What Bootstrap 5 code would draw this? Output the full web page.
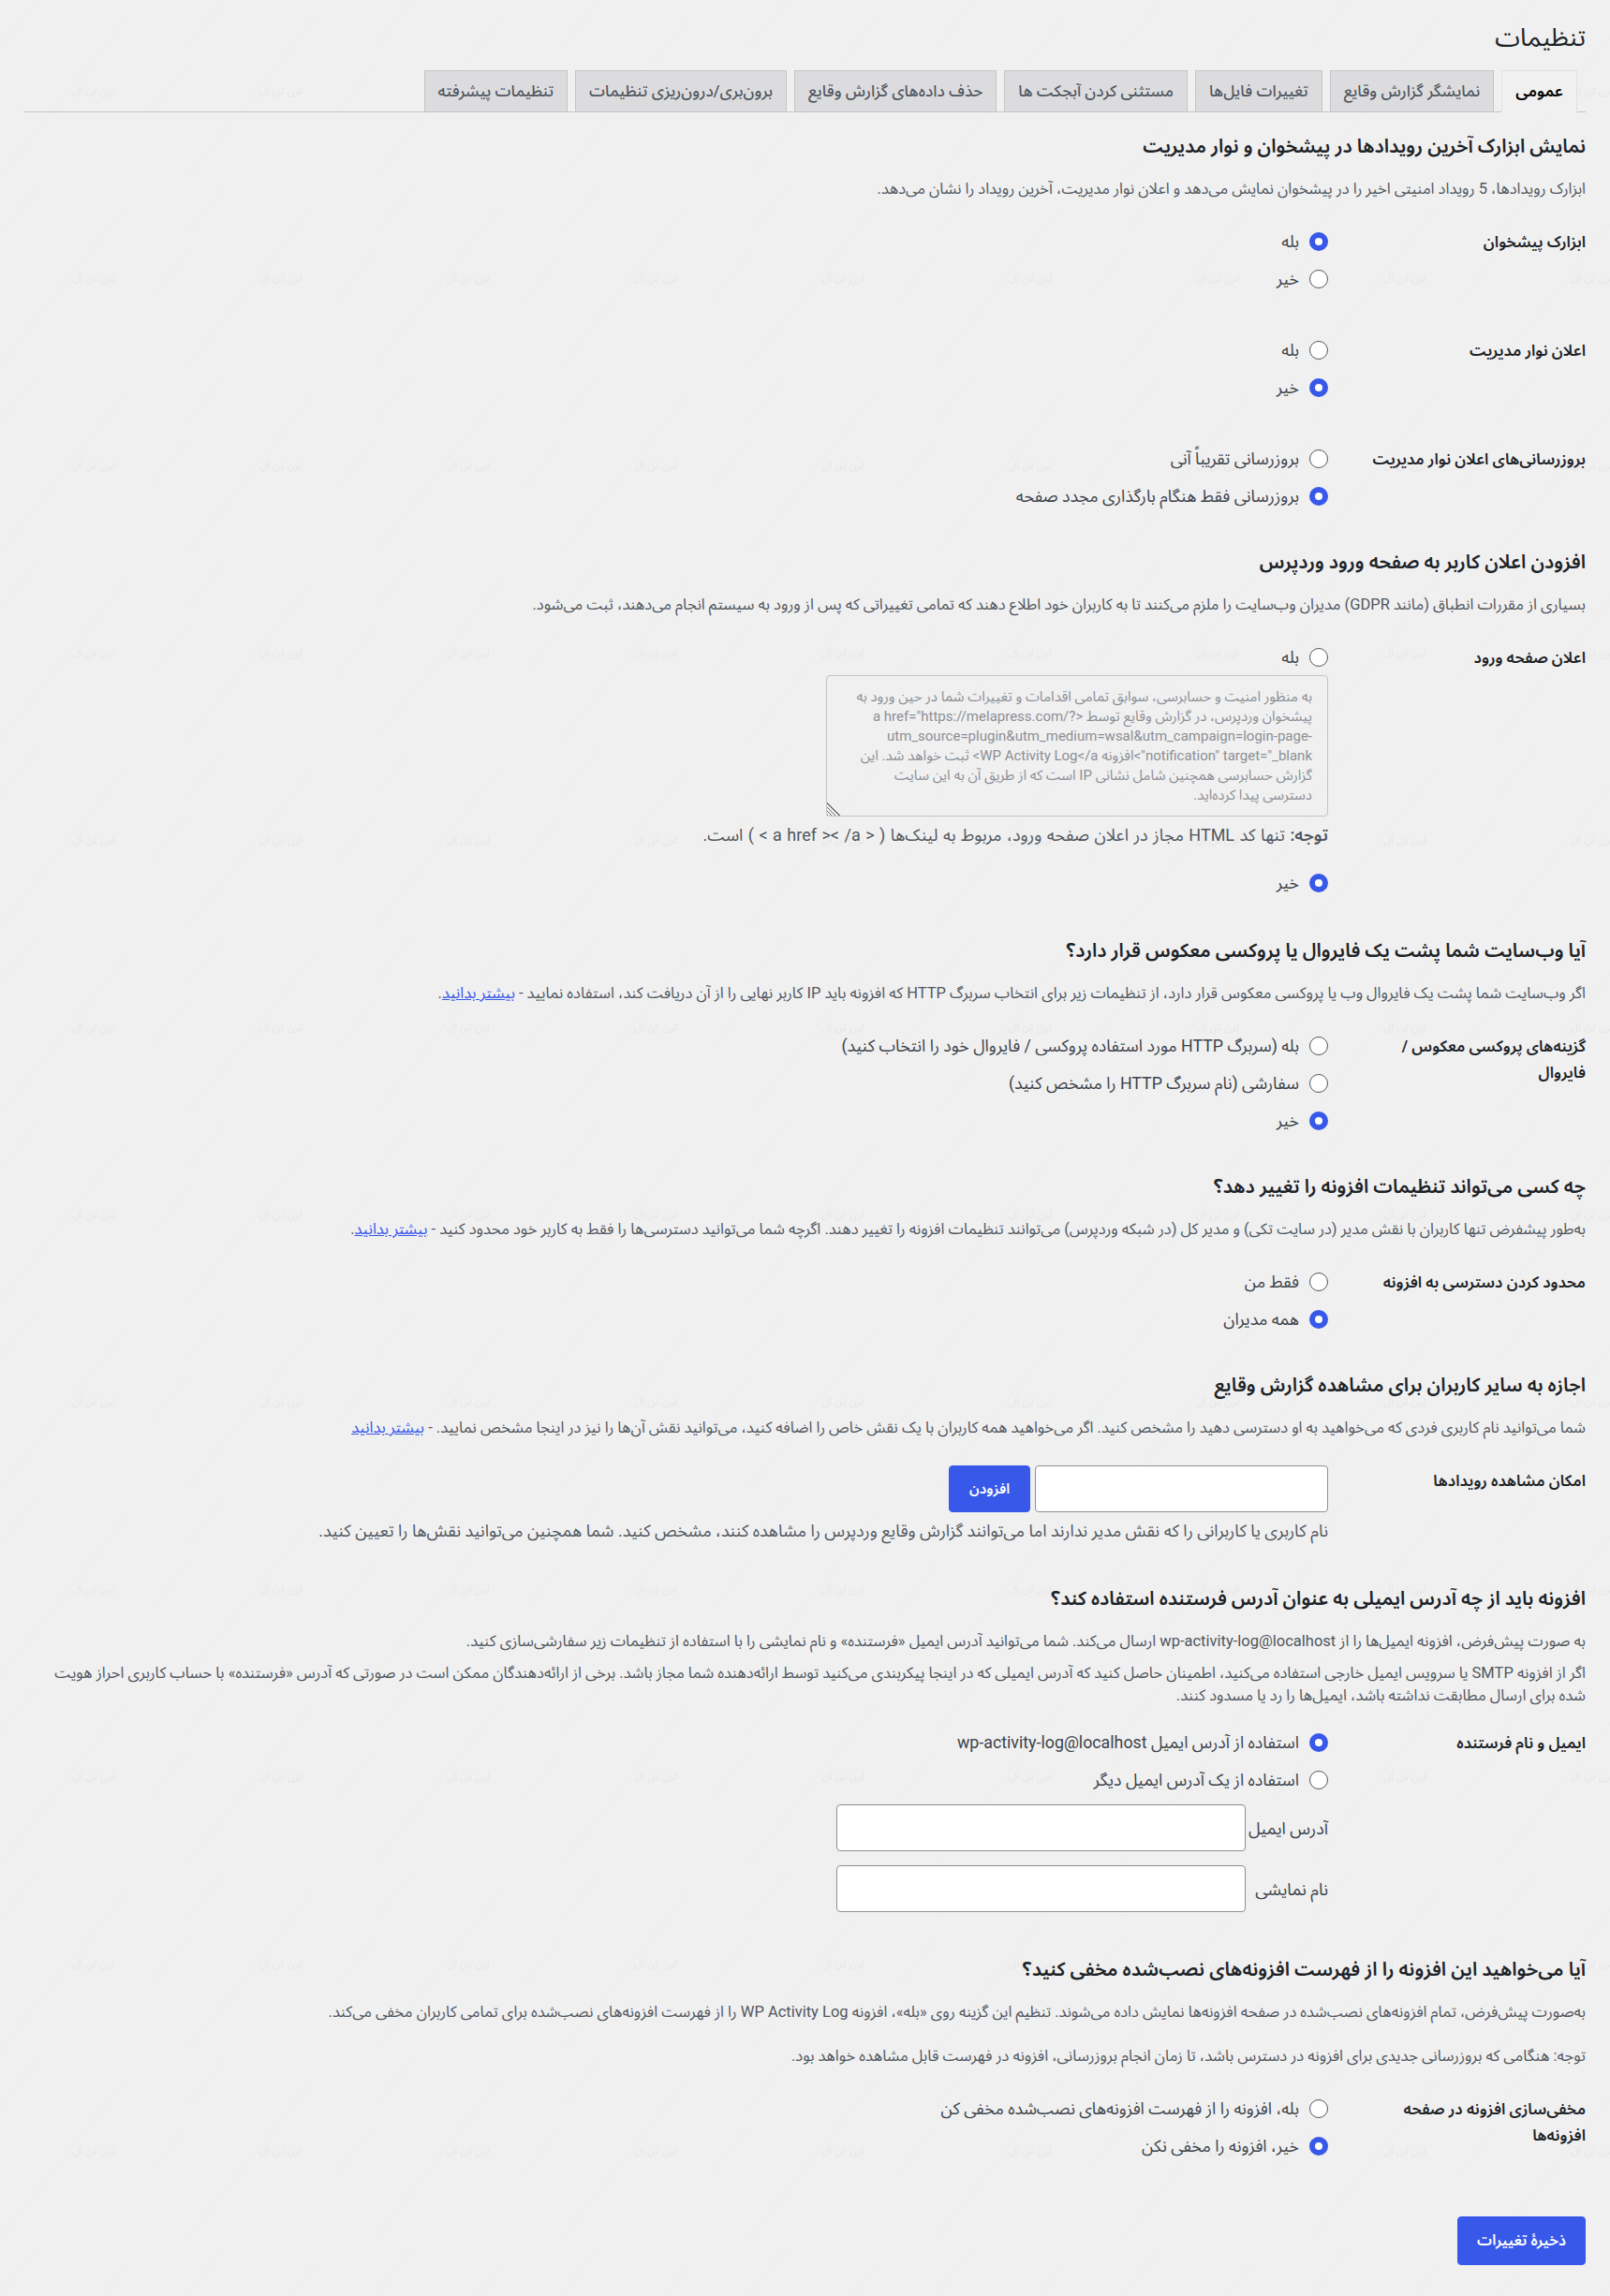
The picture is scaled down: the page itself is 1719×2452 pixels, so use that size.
<!DOCTYPE html>
<html dir="rtl" lang="fa">
<head>
<meta charset="utf-8">
<title>تنظیمات</title>
<link href="https://cdn.jsdelivr.net/npm/bootstrap@5.3.0/dist/css/bootstrap.min.css" rel="stylesheet">
<style>
html,body{min-height:2452px}
body{background-color:#f0f0f1;background-image:url("data:image/svg+xml;utf8,<svg xmlns='http://www.w3.org/2000/svg' width='200' height='200'><path d='M0 190L135 20M200 70L160 120M40 0L0 50' stroke='%23000' stroke-opacity='.012' fill='none'/><text x='100' y='101' text-anchor='middle' direction='rtl' font-size='11' font-weight='700' fill='%23e9e9ea' font-family='Noto Sans Arabic,sans-serif'>لرن تن آل</text></svg>");font-family:Roboto,"Noto Sans Arabic","Liberation Sans",sans-serif;color:#50575e;font-size:16.5px}
.setwrap{padding:0 26px 0 25px}
.pagettl{font-size:27px;font-weight:400;line-height:36px;margin:0;padding-top:22px;color:#1d2327}
.tabsbar{margin-top:17px;border-bottom:1px solid #c3c4c7;padding:0 9px 0 0;gap:8px;flex-wrap:nowrap}
.tabsbar .nav-link{height:45px;margin-bottom:-1px;padding:0 14px;line-height:43px;font-size:17px;font-weight:500;color:#50575e;background:#dcdcde;border:1px solid #c3c4c7;border-radius:0;white-space:nowrap}
.tabsbar .nav-link.active{background:#f0f0f1;color:#000;font-weight:600;border-bottom-color:#f0f0f1}
.secttl{font-size:20.4px;font-weight:600;line-height:28px;color:#1d2327;margin:36px 0 0}
.secttl.first{margin-top:22px}
.secttl.s3{margin-top:38px}
.secttl.s6{margin-top:46px}
.secttl.s7{margin-top:47px}
.secinfo{font-size:16.5px;line-height:24px;margin:20px 0 0;color:#50575e}
.secinfo.tight{margin-top:10px;padding-left:20px}
.secinfo.apart{margin-top:23px}
.secinfo a,.notetxt a{color:#3858e9}
.setrow{margin-top:24px}
.setrow.next{margin-top:36px}
.setrow.boxrow{margin-top:28px}
.setrow.mailrow{margin-top:18px}
.setrow.hiderow{margin-top:24px}
.setlbl{width:275px;flex:0 0 275px;padding-top:7px;padding-left:40px;font-size:16.7px;font-weight:600;line-height:28px;color:#1d2327}
.boxrow .setlbl{padding-top:3px}
.optline{height:40px;font-size:17.8px;color:#3c434a;gap:11px;margin:0}
.form-check-input.wradio{width:20px;height:20px;margin:0;flex:none;background-color:#fff;border:1px solid #50575e;box-shadow:none}
.form-check-input.wradio:checked{background-image:none;background-color:#fff;border:6px solid #3858e9}
.form-control.loginmsg{width:536px;height:151px;display:block;margin-top:-1px;padding:12px 16px;font-size:15px;line-height:21px;color:#8c8f94;background:transparent;border:1px solid #c3c4c7;border-radius:4px;opacity:1}
.loginmsg::-webkit-resizer{background:linear-gradient(to top right,transparent 50%,#f0f0f1 50%),repeating-linear-gradient(45deg,#6f7377 0 1px,transparent 1px 3px)}
.notetxt{font-size:18px;line-height:24px;margin:8px 0 0;color:#50575e}
.notetxt.htmlnote{word-spacing:1px}
.notetxt.addnote{margin-top:8px}
.wide-gap{margin-top:19px}
.txtbox{border:1px solid #8c8f94;border-radius:4px;height:50px;background:#fff;box-shadow:none}
.userbox{width:313px;flex:none}
.addbtn{width:87px;height:50px;margin-right:5px;padding:0;font-size:15px;font-weight:600}
.addbtn,.savebtn{background:#3858e9;border:1px solid #3858e9;border-radius:4px;color:#fff}
.emailline{margin-top:6px}
.emailline+.emailline{margin-top:15px}
.emailline label{width:88px;flex:none;font-size:18px;margin:0;color:#3c434a}
.emailbox{width:437px;flex:none}
.savebtn{width:137px;height:52px;padding:0;font-size:16px;font-weight:600}
.savebar{margin-top:55px}
</style>
</head>
<body>
<div class="setwrap">
  <h1 class="pagettl">تنظیمات</h1>
  <ul class="nav nav-tabs tabsbar">
    <li class="nav-item"><a class="nav-link active" href="#">عمومی</a></li>
    <li class="nav-item"><a class="nav-link" href="#">نمایشگر گزارش وقایع</a></li>
    <li class="nav-item"><a class="nav-link" href="#">تغییرات فایل‌ها</a></li>
    <li class="nav-item"><a class="nav-link" href="#">مستثنی کردن آبجکت ها</a></li>
    <li class="nav-item"><a class="nav-link" href="#">حذف داده‌های گزارش وقایع</a></li>
    <li class="nav-item"><a class="nav-link" href="#">برون‌بری/درون‌ریزی تنظیمات</a></li>
    <li class="nav-item"><a class="nav-link" href="#">تنظیمات پیشرفته</a></li>
  </ul>

  <h3 class="secttl first">نمایش ابزارک آخرین رویدادها در پیشخوان و نوار مدیریت</h3>
  <p class="secinfo">ابزارک رویدادها، 5 رویداد امنیتی اخیر را در پیشخوان نمایش می‌دهد و اعلان نوار مدیریت، آخرین رویداد را نشان می‌دهد.</p>
  <div class="d-flex setrow">
    <div class="setlbl">ابزارک پیشخوان</div>
    <div class="flex-grow-1">
      <label class="d-flex align-items-center optline"><input class="form-check-input wradio" type="radio" name="r1" checked><span>بله</span></label>
      <label class="d-flex align-items-center optline"><input class="form-check-input wradio" type="radio" name="r1"><span>خیر</span></label>
    </div>
  </div>
  <div class="d-flex setrow next">
    <div class="setlbl">اعلان نوار مدیریت</div>
    <div class="flex-grow-1">
      <label class="d-flex align-items-center optline"><input class="form-check-input wradio" type="radio" name="r2"><span>بله</span></label>
      <label class="d-flex align-items-center optline"><input class="form-check-input wradio" type="radio" name="r2" checked><span>خیر</span></label>
    </div>
  </div>
  <div class="d-flex setrow next">
    <div class="setlbl">بروزرسانی‌های اعلان نوار مدیریت</div>
    <div class="flex-grow-1">
      <label class="d-flex align-items-center optline"><input class="form-check-input wradio" type="radio" name="r3"><span>بروزرسانی تقریباً آنی</span></label>
      <label class="d-flex align-items-center optline"><input class="form-check-input wradio" type="radio" name="r3" checked><span>بروزرسانی فقط هنگام بارگذاری مجدد صفحه</span></label>
    </div>
  </div>

  <h3 class="secttl">افزودن اعلان کاربر به صفحه ورود وردپرس</h3>
  <p class="secinfo">بسیاری از مقررات انطباق (مانند GDPR) مدیران وب‌سایت را ملزم می‌کنند تا به کاربران خود اطلاع دهند که تمامی تغییراتی که پس از ورود به سیستم انجام می‌دهند، ثبت می‌شود.</p>
  <div class="d-flex setrow">
    <div class="setlbl">اعلان صفحه ورود</div>
    <div class="flex-grow-1">
      <label class="d-flex align-items-center optline"><input class="form-check-input wradio" type="radio" name="r4"><span>بله</span></label>
      <textarea class="form-control loginmsg" disabled>به منظور امنیت و حسابرسی، سوابق تمامی اقدامات و تغییرات شما در حین ورود به پیشخوان وردپرس، در گزارش وقایع توسط <a href="https://melapress.com/?utm_source=plugin&utm_medium=wsal&utm_campaign=login-page-notification" target="_blank">افزونه WP Activity Log</a> ثبت خواهد شد. این گزارش حسابرسی همچنین شامل نشانی IP است که از طریق آن به این سایت دسترسی پیدا کرده‌اید.</textarea>
      <p class="notetxt htmlnote"><b class="fw-semibold">توجه:</b> تنها کد HTML مجاز در اعلان صفحه ورود، مربوط به لینک‌ها ( &lt; a href &gt;&lt; /a &gt; ) است.</p>
      <label class="d-flex align-items-center optline wide-gap"><input class="form-check-input wradio" type="radio" name="r4" checked><span>خیر</span></label>
    </div>
  </div>

  <h3 class="secttl s3">آیا وب‌سایت شما پشت یک فایروال یا پروکسی معکوس قرار دارد؟</h3>
  <p class="secinfo">اگر وب‌سایت شما پشت یک فایروال وب یا پروکسی معکوس قرار دارد، از تنظیمات زیر برای انتخاب سربرگ HTTP که افزونه باید IP کاربر نهایی را از آن دریافت کند، استفاده نمایید - <a href="#">بیشتر بدانید</a>.</p>
  <div class="d-flex setrow">
    <div class="setlbl">گزینه‌های پروکسی معکوس / فایروال</div>
    <div class="flex-grow-1">
      <label class="d-flex align-items-center optline"><input class="form-check-input wradio" type="radio" name="r5"><span>بله (سربرگ HTTP مورد استفاده پروکسی / فایروال خود را انتخاب کنید)</span></label>
      <label class="d-flex align-items-center optline"><input class="form-check-input wradio" type="radio" name="r5"><span>سفارشی (نام سربرگ HTTP را مشخص کنید)</span></label>
      <label class="d-flex align-items-center optline"><input class="form-check-input wradio" type="radio" name="r5" checked><span>خیر</span></label>
    </div>
  </div>

  <h3 class="secttl">چه کسی می‌تواند تنظیمات افزونه را تغییر دهد؟</h3>
  <p class="secinfo">به‌طور پیشفرض تنها کاربران با نقش مدیر (در سایت تکی) و مدیر کل (در شبکه وردپرس) می‌توانند تنظیمات افزونه را تغییر دهند. اگرچه شما می‌توانید دسترسی‌ها را فقط به کاربر خود محدود کنید - <a href="#">بیشتر بدانید</a>.</p>
  <div class="d-flex setrow">
    <div class="setlbl">محدود کردن دسترسی به افزونه</div>
    <div class="flex-grow-1">
      <label class="d-flex align-items-center optline"><input class="form-check-input wradio" type="radio" name="r6"><span>فقط من</span></label>
      <label class="d-flex align-items-center optline"><input class="form-check-input wradio" type="radio" name="r6" checked><span>همه مدیران</span></label>
    </div>
  </div>

  <h3 class="secttl">اجازه به سایر کاربران برای مشاهده گزارش وقایع</h3>
  <p class="secinfo">شما می‌توانید نام کاربری فردی که می‌خواهید به او دسترسی دهید را مشخص کنید. اگر می‌خواهید همه کاربران با یک نقش خاص را اضافه کنید، می‌توانید نقش آن‌ها را نیز در اینجا مشخص نمایید. - <a href="#">بیشتر بدانید</a></p>
  <div class="d-flex setrow boxrow">
    <div class="setlbl">امکان مشاهده رویدادها</div>
    <div class="flex-grow-1">
      <div class="d-flex">
        <input class="form-control txtbox userbox" type="text" aria-label="کاربر">
        <button class="btn addbtn" type="button">افزودن</button>
      </div>
      <p class="notetxt addnote">نام کاربری یا کاربرانی را که نقش مدیر ندارند اما می‌توانند گزارش وقایع وردپرس را مشاهده کنند، مشخص کنید. شما همچنین می‌توانید نقش‌ها را تعیین کنید.</p>
    </div>
  </div>

  <h3 class="secttl s6">افزونه باید از چه آدرس ایمیلی به عنوان آدرس فرستنده استفاده کند؟</h3>
  <p class="secinfo">به صورت پیش‌فرض، افزونه ایمیل‌ها را از wp-activity-log@localhost ارسال می‌کند. شما می‌توانید آدرس ایمیل «فرستنده» و نام نمایشی را با استفاده از تنظیمات زیر سفارشی‌سازی کنید.</p>
  <p class="secinfo tight">اگر از افزونه SMTP یا سرویس ایمیل خارجی استفاده می‌کنید، اطمینان حاصل کنید که آدرس ایمیلی که در اینجا پیکربندی می‌کنید توسط ارائه‌دهنده شما مجاز باشد. برخی از ارائه‌دهندگان ممکن است در صورتی که آدرس «فرستنده» با حساب کاربری احراز هویت شده برای ارسال مطابقت نداشته باشد، ایمیل‌ها را رد یا مسدود کنند.</p>
  <div class="d-flex setrow mailrow">
    <div class="setlbl">ایمیل و نام فرستنده</div>
    <div class="flex-grow-1">
      <label class="d-flex align-items-center optline"><input class="form-check-input wradio" type="radio" name="r7" checked><span>استفاده از آدرس ایمیل wp-activity-log@localhost</span></label>
      <label class="d-flex align-items-center optline"><input class="form-check-input wradio" type="radio" name="r7"><span>استفاده از یک آدرس ایمیل دیگر</span></label>
      <div class="d-flex align-items-center emailline"><label for="mailaddr">آدرس ایمیل</label><input id="mailaddr" class="form-control txtbox emailbox" type="text"></div>
      <div class="d-flex align-items-center emailline"><label for="mailname">نام نمایشی</label><input id="mailname" class="form-control txtbox emailbox" type="text"></div>
    </div>
  </div>

  <h3 class="secttl s7">آیا می‌خواهید این افزونه را از فهرست افزونه‌های نصب‌شده مخفی کنید؟</h3>
  <p class="secinfo">به‌صورت پیش‌فرض، تمام افزونه‌های نصب‌شده در صفحه افزونه‌ها نمایش داده می‌شوند. تنظیم این گزینه روی «بله»، افزونه WP Activity Log را از فهرست افزونه‌های نصب‌شده برای تمامی کاربران مخفی می‌کند.</p>
  <p class="secinfo apart">توجه: هنگامی که بروزرسانی جدیدی برای افزونه در دسترس باشد، تا زمان انجام بروزرسانی، افزونه در فهرست قابل مشاهده خواهد بود.</p>
  <div class="d-flex setrow hiderow">
    <div class="setlbl">مخفی‌سازی افزونه در صفحه افزونه‌ها</div>
    <div class="flex-grow-1">
      <label class="d-flex align-items-center optline"><input class="form-check-input wradio" type="radio" name="r8"><span>بله، افزونه را از فهرست افزونه‌های نصب‌شده مخفی کن</span></label>
      <label class="d-flex align-items-center optline"><input class="form-check-input wradio" type="radio" name="r8" checked><span>خیر، افزونه را مخفی نکن</span></label>
    </div>
  </div>

  <div class="savebar"><button class="btn savebtn" type="button">ذخیرهٔ تغییرات</button></div>
</div>
<script src="https://cdn.jsdelivr.net/npm/bootstrap@5.3.0/dist/js/bootstrap.bundle.min.js"></script>
</body>
</html>
